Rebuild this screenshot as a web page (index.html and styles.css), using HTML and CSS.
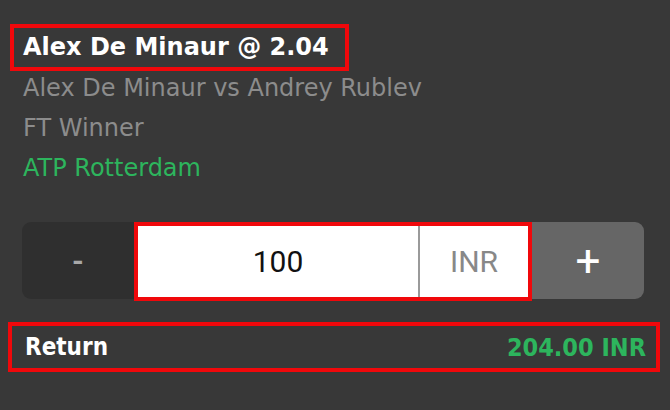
FILE: index.html
```html
<!DOCTYPE html>
<html lang="en">
<head>
  <meta charset="UTF-8" />
  <meta name="viewport" content="width=device-width, initial-scale=1.0" />
  <title>Bet slip</title>
  <link rel="stylesheet" href="styles.css">
</head>
<body>

  <!-- Selection -->
  <div class="slip">
    <div class="pick">
      <span>Alex De Minaur @ 2.04</span>
    </div>
    <div class="meta">
      <div class="event">Alex De Minaur vs Andrey Rublev</div>
      <div class="market">FT Winner</div>
      <div class="league">ATP Rotterdam</div>
    </div>

    <!-- Stake -->
    <div class="stake">
      <button class="step minus">-</button>
      <div class="amount">
        <div class="value">100</div>
        <div class="currency">INR</div>
      </div>
      <button class="step plus">+</button>
    </div>

    <!-- Return -->
    <div class="return">
      <span class="label">Return</span>
      <span class="sum">204.00 INR</span>
    </div>
  </div>

</body>
</html>
```

FILE: styles.css
```css
body {
  margin: 0;
  background: #383838;
  color: #fff;
  font-family: "DejaVu Sans", sans-serif;
}

.slip {
  padding: 24px 10px 0 8px;
}

/* Selection */
.pick {
  display: inline-block;
  margin-left: 2px;
  border: 4px solid #f0080b;
  padding: 0 16px 0 9px;
  height: 39px;
  line-height: 39px;
  font-size: 24px;
  font-weight: bold;
}

.meta {
  margin-top: -3px;
  padding-left: 15px;
  font-size: 24px;
  line-height: 40px;
  color: #8c8c8c;
}

.league {
  color: #2db55d;
}

/* Stake */
.stake {
  display: flex;
  margin: 34px 16px 0 14px;
  height: 77px;
}

.step {
  width: 112px;
  border: 0;
  font-family: Roboto, sans-serif;
  padding: 0;
}

.minus {
  background: #2f2f2f;
  color: #a8a8a8;
  border-radius: 9px 0 0 9px;
  font-size: 30px;
  font-weight: bold;
}

.plus {
  background: #666;
  color: #fff;
  border-radius: 0 9px 9px 0;
  font-size: 44px;
}

.amount {
  flex: 1;
  display: flex;
  background: #fff;
  border: 4px solid #f0080b;
  margin-bottom: -2px;
  font-family: Roboto, sans-serif;
  font-size: 30px;
}

.value {
  flex: 1;
  display: flex;
  align-items: center;
  justify-content: center;
  color: #111;
}

.currency {
  width: 108px;
  display: flex;
  align-items: center;
  justify-content: center;
  border-left: 2px solid #9a9a9a;
  color: #888;
}

/* Return */
.return {
  display: flex;
  justify-content: space-between;
  align-items: center;
  margin-top: 23px;
  height: 42px;
  border: 4px solid #f0080b;
  padding: 0 10px 0 13px;
  font-family: "DejaVu Sans Condensed", "DejaVu Sans", sans-serif;
  font-weight: bold;
  font-size: 24px;
}

.sum {
  color: #2db55d;
  font-size: 25px;
}
```
